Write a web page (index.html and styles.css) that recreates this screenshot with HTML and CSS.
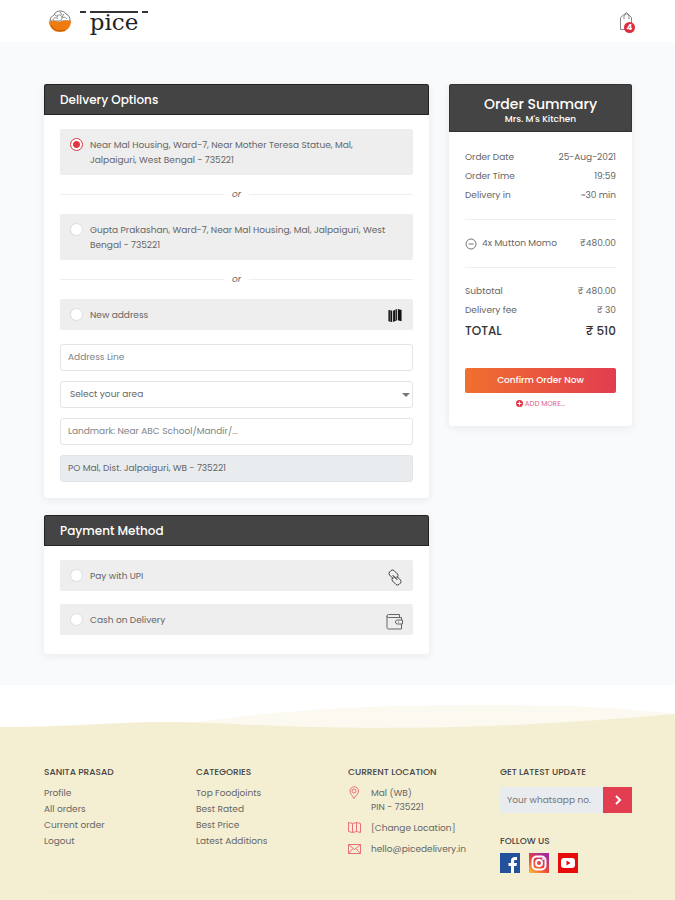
FILE: index.html
```html
<!DOCTYPE html>
<html lang="en">

<head>
 <meta charset="UTF-8">
 <meta name="viewport" content="width=device-width, initial-scale=1.0">
 <title>Pice - Checkout</title>
 <link rel="stylesheet" href="styles.css">
</head>

<body>
 <header class="topbar">
  <a class="logo" href="#">
   <svg width="24" height="24" viewBox="0 0 24 24">
    <path d="M2 12C2 9 4 7 6 6c1-3 4-4 6-4 3 0 5 1 6 3 3 1 4 4 4 7z" fill="#fff" stroke="#777" />
    <path d="M5 11c1-3 4-3 5-1M9 7c2-2 5-1 5 2M13 11c1-3 4-4 6-1M7 6l3 2M12 3l2 3M16 5l-2 3" fill="none" stroke="#888" />
    <path d="M1 12c2 1 4-1 6 0s5 1 8 0 5 0 8 0c0 6-4 11-11 11S1 18 1 12z" fill="#ee7b0d" />
    <path d="M3 16c2 5 8 7 14 5" fill="none" stroke="#b85d0c" />
   </svg>
   <span class="brand">
    <span class="bars"><i></i><i></i><i></i></span>
    <span class="name">pice</span>
   </span>
  </a>
  <a class="cart" href="#" aria-label="Cart">
   <svg width="15" height="20" viewBox="0 0 15 20" fill="none" stroke="#888">
    <path d="M1.500 6.500L7.500 1.500l5 5v12h-11z" />
    <path d="M5 8V5.500a2.500 2.500 0 0 1 5 0V8" />
   </svg>
   <span class="badge">4</span>
  </a>
 </header>

 <main class="checkout">
  <div class="column">
   <section class="card">
    <h2 class="card-title">Delivery Options</h2>
    <div class="card-body">
     <label class="option">
      <input type="radio" name="address" checked>
      <span>Near Mal Housing, Ward-7, Near Mother Teresa Statue, Mal, Jalpaiguri, West Bengal - 735221</span>
     </label>
     <div class="or">or</div>
     <label class="option">
      <input type="radio" name="address">
      <span>Gupta Prakashan, Ward-7, Near Mal Housing, Mal, Jalpaiguri, West Bengal - 735221</span>
     </label>
     <div class="or">or</div>
     <label class="option">
      <input type="radio" name="address">
      <span>New address</span>
      <svg width="16" height="15" viewBox="0 0 16 16">
       <path d="M1 2l4 1v12l-4-1zM6 3l4-2v12l-4 2zM11 1l4 1v12l-4-1z" fill="#111" />
       <path d="M8.500 2v11M3 3v11" stroke="#777" />
      </svg>
     </label>
     <div class="fields">
      <input class="field" type="text" placeholder="Address Line" aria-label="Address Line">
      <div class="select">
       <select class="field" aria-label="Area">
        <option>Select your area</option>
       </select>
      </div>
      <input class="field" type="text" placeholder="Landmark: Near ABC School/Mandir/..." aria-label="Landmark">
      <input class="field" type="text" value="PO Mal, Dist. Jalpaiguri, WB - 735221" aria-label="Post office" readonly>
     </div>
    </div>
   </section>

   <section class="card">
    <h2 class="card-title">Payment Method</h2>
    <div class="card-body payment">
     <label class="option">
      <input type="radio" name="payment">
      <span>Pay with UPI</span>
      <svg width="16" height="17" viewBox="0 0 16 17" fill="none" stroke="#444">
       <path d="M6 9.500L2.500 6a2.500 2.500 0 0 1 0-3L4 1.500a2.500 2.500 0 0 1 3 0L10.500 5a2.500 2.500 0 0 1 0 3L9 9.500 5.500 6" />
       <path d="M10 7.500l3.500 3.500a2.500 2.500 0 0 1 0 3L12 15.500a2.500 2.500 0 0 1-3 0L5.500 12a2.500 2.500 0 0 1 0-3L7 7.500l3.500 3.500" />
      </svg>
     </label>
     <label class="option">
      <input type="radio" name="payment">
      <span>Cash on Delivery</span>
      <svg width="17" height="17" viewBox="0 0 17 17" fill="none" stroke="#666">
       <path d="M15.500 7V4.500h-13a1.500 1.500 0 0 1 0-3h11v3M1 3v11.500q0 1.500 1.500 1.500h13v-5" />
       <path d="M16.500 7h-5a2 2 0 0 0 0 4h5zM12 9h1" />
      </svg>
     </label>
    </div>
   </section>
  </div>

  <aside class="card summary">
   <div class="summary-head">
    <h2>Order Summary</h2>
    <p>Mrs. M's Kitchen</p>
   </div>
   <div class="summary-body">
    <div class="line"><span>Order Date</span><span>25-Aug-2021</span></div>
    <div class="line"><span>Order Time</span><span>19:59</span></div>
    <div class="line"><span>Delivery in</span><span>~30 min</span></div>
    <hr>
    <div class="line">
     <span class="item">
      <button class="remove" aria-label="Remove item">
       <svg width="12" height="12" viewBox="0 0 12 12" fill="none" stroke="#777">
        <circle cx="6" cy="6" r="5" />
        <path d="M3.500 6h5" />
       </svg>
      </button>
      4x Mutton Momo
     </span>
     <span>₹480.00</span>
    </div>
    <hr>
    <div class="line"><span>Subtotal</span><span>₹ 480.00</span></div>
    <div class="line"><span>Delivery fee</span><span>₹ 30</span></div>
    <div class="line total"><span>TOTAL</span><span>₹ 510</span></div>
    <button class="confirm">Confirm Order Now</button>
    <a class="more" href="#">
     <svg width="7" height="7" viewBox="0 0 7 7">
      <circle cx="3.500" cy="3.500" r="3.500" fill="#dc3545" />
      <path d="M1.500 3.500h4M3.500 1.500v4" stroke="#fff" />
     </svg>
     ADD MORE...
    </a>
   </div>
  </aside>
 </main>

 <svg class="wave" viewBox="0 0 675 43" preserveAspectRatio="none">
  <path d="M190 38C280 25 370 20 480 20s150 4 195 9v14H190z" fill="#fbf9f0" />
  <path d="M0 42C75 42 110 37 165 37s120 6 210 6C500 43 590 36 675 29v14H0z" fill="#f4efd2" />
 </svg>
 <footer class="footer">
  <div class="footer-grid">
   <div>
    <h3>SANITA PRASAD</h3>
    <ul class="links">
     <li><a href="#">Profile</a></li>
     <li><a href="#">All orders</a></li>
     <li><a href="#">Current order</a></li>
     <li><a href="#">Logout</a></li>
    </ul>
   </div>
   <div>
    <h3>CATEGORIES</h3>
    <ul class="links">
     <li><a href="#">Top Foodjoints</a></li>
     <li><a href="#">Best Rated</a></li>
     <li><a href="#">Best Price</a></li>
     <li><a href="#">Latest Additions</a></li>
    </ul>
   </div>
   <div>
    <h3>CURRENT LOCATION</h3>
    <ul class="contact">
     <li>
      <svg width="13" height="13" viewBox="0 0 13 13" fill="none" stroke="#e8707a">
       <path d="M6 12.500C4 9 2 7.500 2 5a4 4 0 0 1 8.500 0c0 2.500-2.500 4-4.500 7.500z" />
       <circle cx="6" cy="5" r="2" />
      </svg>
      <span>Mal (WB)<br>PIN - 735221</span>
     </li>
     <li>
      <svg width="13" height="13" viewBox="0 0 13 13" fill="none" stroke="#e8707a">
       <path d="M.5 1.500l4 1 4-1 4 1v9l-4-1-4 1-4-1zM4.500 2.500v9M8.500 1.500v9" />
      </svg>
      <a href="#">[Change Location]</a>
     </li>
     <li>
      <svg width="13" height="13" viewBox="0 0 13 13" fill="none" stroke="#e8707a">
       <path d="M.5 2.500h12v9H.5zM.5 2.500l6 5 6-5M.5 11.500l4.500-5M12.500 11.500L8 6.500" />
      </svg>
      <a href="#">hello@picedelivery.in</a>
     </li>
    </ul>
   </div>
   <div>
    <h3>GET LATEST UPDATE</h3>
    <form class="subscribe">
     <input type="text" placeholder="Your whatsapp no." aria-label="Your whatsapp no.">
     <button type="button" aria-label="Subscribe">
      <svg width="8" height="10" viewBox="0 0 8 10" fill="none" stroke="#fff" stroke-width="2">
       <path d="M2 1l4 4-4 4" />
      </svg>
     </button>
    </form>
    <h3>FOLLOW US</h3>
    <div class="social">
     <a href="#" aria-label="Facebook">
      <svg width="20" height="20" viewBox="0 0 20 20">
       <path d="M0 0h20v20H0z" fill="#24519b" />
       <path d="M11 20v-7H8.500v-3H11V8c0-3 1.500-4 4-4h2v3h-1.500C14 7 14 7.500 14 8.500V10h3l-.5 3H14v7z" fill="#fff" />
      </svg>
     </a>
     <a href="#" aria-label="Instagram">
      <svg width="20" height="20" viewBox="0 0 20 20">
       <defs>
        <linearGradient id="insta" x1="0" y1="1" x2=".7" y2="0">
         <stop offset="0" stop-color="#fdc23e" />
         <stop offset=".5" stop-color="#ee4538" />
         <stop offset="1" stop-color="#a52a9b" />
        </linearGradient>
       </defs>
       <path d="M0 0h20v20H0z" fill="url(#insta)" />
       <g fill="none" stroke="#fff" stroke-width="2">
        <rect x="3.500" y="3.500" width="13" height="13" rx="4" />
        <circle cx="10" cy="10" r="3" />
       </g>
       <circle cx="14" cy="6" r="1" fill="#fff" />
      </svg>
     </a>
     <a href="#" aria-label="YouTube">
      <svg width="20" height="20" viewBox="0 0 20 20">
       <path d="M0 0h20v20H0z" fill="#e60c0c" />
       <rect x="3" y="5" width="14" height="10" rx="3" fill="#fff" />
       <path d="M8.500 7.500v5l4-2.500z" fill="#e60c0c" />
      </svg>
     </a>
    </div>
   </div>
  </div>
 </footer>
</body>

</html>
```

FILE: styles.css
```css
* {
 box-sizing: border-box;
}

body {
 margin: 0;
 min-height: 100vh;
 display: flex;
 flex-direction: column;
 background: #fff;
 color: #666;
 font-family: Poppins, Inter, sans-serif;
 font-size: 9px;
 line-height: 15px;
}

h2,
h3,
p,
ul {
 margin: 0;
 padding: 0;
 list-style: none;
}

a {
 color: inherit;
 text-decoration: none;
}

input,
select,
button {
 font: inherit;
 color: inherit;
}

button {
 border: 0;
 padding: 0;
 cursor: pointer;
}

svg {
 display: block;
 flex: none;
}

.topbar {
 display: flex;
 justify-content: space-between;
 align-items: center;
 height: 42px;
 padding: 0 41px 0 48px;
}

.logo {
 display: flex;
 align-items: center;
 gap: 8px;
}

.brand {
 display: flex;
 flex-direction: column;
 align-items: center;
 color: #222;
}

.bars {
 display: flex;
 gap: 4px;
}

.bars i {
 width: 6px;
 height: 2px;
 background: #333;
}

.bars i:nth-child(2) {
 width: 48px;
}

.name {
 font-family: "DejaVu Serif", serif;
 font-size: 23px;
 line-height: 18px;
}

.cart {
 position: relative;
}

.badge {
 position: absolute;
 right: -1px;
 bottom: -2px;
 width: 11px;
 height: 11px;
 border-radius: 50%;
 background: #dc2f3d;
 color: #fff;
 font-size: 8px;
 font-weight: 700;
 line-height: 11px;
 text-align: center;
}

.checkout {
 display: grid;
 grid-template-columns: 385fr 183fr;
 align-items: start;
 gap: 20px;
 padding: 42px 43px 31px 44px;
 background: #f8fafc;
}

.column {
 display: grid;
 gap: 17px;
}

.card {
 background: #fff;
 border-radius: 3px;
 box-shadow: 0 2px 8px rgba(0, 0, 0, .07);
 overflow: hidden;
}

.card-title {
 padding: 1px 15px 0;
 background: #444;
 border: 1px solid #222;
 color: #fff;
 font-size: 12px;
 font-weight: 500;
 line-height: 28px;
}

.card-body {
 padding: 14px 16px 16px;
}

.option {
 display: flex;
 align-items: flex-start;
 gap: 7px;
 padding: 9px 10px 7px;
 background: #eee;
 border-radius: 2px;
}

.option span {
 flex: 1;
 padding-right: 8px;
}

.option svg {
 margin-bottom: -2px;
}

.option input {
 appearance: none;
 flex: none;
 width: 13px;
 height: 13px;
 margin: 0;
 border: 1px solid #ddd;
 border-radius: 50%;
 background: #fff;
}

.option input:checked {
 border-color: #e23744;
 background: radial-gradient(#e23744 3px, #fff 4px);
}

.or {
 display: flex;
 align-items: center;
 gap: 8px;
 height: 39px;
 font-style: italic;
}

.or::before,
.or::after {
 content: "";
 flex: 1;
 border-top: 1px solid #eee;
}

.fields {
 display: grid;
 gap: 10px;
 margin-top: 14px;
}

.field {
 display: block;
 width: 100%;
 height: 27px;
 padding: 0 7px;
 border: 1px solid #e2e5e8;
 border-radius: 3px;
 background: #fff;
}

.field::placeholder {
 color: #808488;
}

.field:read-only:not(select) {
 background: #e9ecef;
}

.select {
 position: relative;
}

.select select {
 appearance: none;
 padding: 0 9px;
}

.select::after {
 content: "";
 position: absolute;
 right: 3px;
 top: 12px;
 border: 4px solid transparent;
 border-top-color: #777;
 pointer-events: none;
}

.payment {
 display: grid;
 gap: 13px;
 padding-bottom: 19px;
}

.summary-head {
 padding: 10px 8px 5px;
 background: #444;
 border: 1px solid #333;
 color: #fff;
 text-align: center;
}

.summary-head h2 {
 font-size: 14px;
 font-weight: 500;
 line-height: 18px;
}

.summary-head p {
 font-weight: 500;
 line-height: 13px;
}

.summary-body {
 padding: 16px 16px 15px;
}

.line {
 display: flex;
 justify-content: space-between;
 line-height: 19px;
}

.item {
 display: flex;
 align-items: center;
 gap: 5px;
}

.remove {
 background: none;
}

.summary hr {
 margin: 14px 0;
 border: 0;
 border-top: 1px solid #eee;
}

.total {
 color: #333;
 font-size: 12px;
 font-weight: 500;
 line-height: 22px;
}

.confirm {
 width: 100%;
 height: 25px;
 margin-top: 26px;
 border-radius: 2px;
 background: linear-gradient(to right, #f0702f, #e23d50);
 color: #fff;
 font-weight: 500;
}

.more {
 display: flex;
 justify-content: center;
 align-items: center;
 gap: 2px;
 margin-top: 3px;
 color: #e0647a;
 font-size: 7px;
}

.wave {
 width: 100%;
 height: 43px;
}

.footer {
 flex: 1;
 padding: 36px 43px 6px 44px;
 background: #f4efd2;
}

.footer-grid {
 display: grid;
 grid-template-columns: repeat(4, minmax(0, 1fr));
 gap: 20px;
 padding-bottom: 19px;
 border-bottom: 1px solid #f1ebca;
}

.footer h3 {
 color: #444;
 font-size: 9px;
 font-weight: 500;
 line-height: 16px;
}

.links {
 margin-top: 5px;
 line-height: 16px;
}

.contact {
 display: grid;
 gap: 7px;
 margin-top: 6px;
 line-height: 14px;
}

.contact li {
 display: flex;
 gap: 10px;
}

.subscribe {
 display: flex;
 height: 26px;
 margin: 7px 0 20px;
}

.subscribe input {
 flex: 1;
 min-width: 0;
 padding: 0 7px;
 border: 0;
 border-radius: 2px 0 0 2px;
 background: #e9ecef;
}

.subscribe button {
 display: grid;
 place-items: center;
 width: 29px;
 background: #e23d50;
}

.social {
 display: flex;
 gap: 9px;
 margin-top: 4px;
}
```
